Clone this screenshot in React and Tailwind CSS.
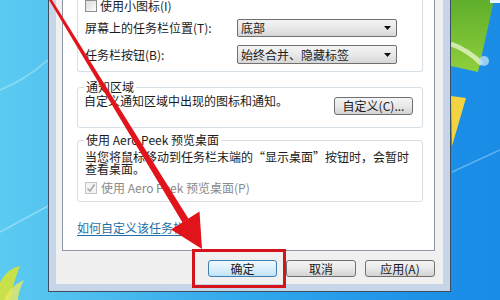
import React from 'react';

const font = "font-['Noto_Sans_CJK_SC','Noto_Sans',sans-serif]";

function Wallpaper() {
  return (
    <svg className="absolute inset-0" width="500" height="300" viewBox="0 0 500 300">
      <defs>
        <linearGradient id="sky" x1="0" y1="0" x2="1" y2="0">
          <stop offset="0" stopColor="#5ccbf1" />
          <stop offset="0.45" stopColor="#35aaec" />
          <stop offset="0.9" stopColor="#1b8ee7" />
          <stop offset="1" stopColor="#1a8ce6" />
        </linearGradient>
        <linearGradient id="green" x1="0" y1="0" x2="0" y2="1">
          <stop offset="0" stopColor="#5fae2c" />
          <stop offset="1" stopColor="#8fcf3c" />
        </linearGradient>
      </defs>
      <rect width="500" height="300" fill="url(#sky)" />
      <path d="M0 90 Q 25 80 48 60" stroke="#9fe3f8" strokeWidth="2" fill="none" opacity="0.6" />
      <path d="M0 232 L48 206" stroke="#a8e6fa" strokeWidth="1.5" opacity="0.7" />
      <path d="M0 282 Q 8 268 20 266 Q 14 280 10 300 L0 300 Z" fill="#c8e04a" />
      <path d="M4 300 Q 10 286 24 280 Q 18 292 18 300 Z" fill="#e8e860" opacity="0.8" />
      <path d="M451 0 L494 0 L478 72 L451 66 Z" fill="url(#green)" />
      <path d="M451 44 Q 468 50 482 64" stroke="#e6f2c8" strokeWidth="5" fill="none" opacity="0.8" />
      <circle cx="484" cy="61" r="5" fill="#b9dcf6" opacity="0.8" />
      <path d="M490 0 L500 0 L500 3 L490 3 Z" fill="#e8f4ff" />
      <path d="M451 96 L466 98 L452 146 Z" fill="#f3d440" />
      <path d="M452 172 L500 150" stroke="#5fb3f0" strokeWidth="1.5" />
    </svg>
  );
}

function Arrow() {
  return (
    <svg className="absolute inset-0 pointer-events-none" width="500" height="300" viewBox="0 0 500 300">
      <polygon points="49,0 52,0 188.5,218.8 182.5,222.4" fill="#e2141b" />
      <polygon points="202,249 199.5,211.5 171,229.5" fill="#e2141b" />
    </svg>
  );
}

function Checkbox({ checked }) {
  if (checked) {
    return (
      <span className="w-[12px] h-[12px] border border-[#c4c4c4] bg-[#f4f4f4] flex items-center justify-center shrink-0">
        <svg width="10" height="10" viewBox="0 0 10 10">
          <path d="M1.5 5.5 L4 8 L8.5 1.5" stroke="#a9a9a9" strokeWidth="1.6" fill="none" />
        </svg>
      </span>
    );
  }
  return (
    <span className="w-[12px] h-[12px] border border-[#8f8f8f] bg-gradient-to-br from-[#dcdcdc] to-[#fbfbfb] shrink-0" />
  );
}

function Combo({ value }) {
  return (
    <div className="w-[160px] h-full border border-[#707070] rounded-[2px] bg-gradient-to-b from-[#f3f3f3] via-[#e9e9e9] to-[#d6d6d6] flex items-center justify-between pl-[3px] pr-[5px]">
      <span>{value}</span>
      <svg width="7" height="4" viewBox="0 0 7 4">
        <path d="M0 0 L7 0 L3.5 4 Z" fill="#111" />
      </svg>
    </div>
  );
}

function Button({ children, primary, className = '' }) {
  const look = primary
    ? 'border-[#3c7fb1] bg-gradient-to-b from-[#eef8fd] via-[#dcf0fb] to-[#c0e2f5]'
    : 'border-[#707070] bg-gradient-to-b from-[#f5f5f5] via-[#e8e8e8] to-[#d3d3d3]';
  return (
    <div className={`h-[17px] border rounded-[3px] flex items-center justify-center text-[12px] leading-[12px] ${look} ${className}`}>
      {children}
    </div>
  );
}

export default function App() {
  return (
    <div className={`relative w-[500px] h-[300px] overflow-hidden text-[12px] leading-[12px] text-[#1b1b1b] ${font}`}>
      <Wallpaper />
      <div className="relative ml-[48px] w-[403px] h-[292px] border-x border-b border-[#3b4d5f] bg-[#c6d6e8] px-[7px] pb-[7px] flex flex-col">
        <div className="flex-1 bg-[#f0f0f0] pl-[6px] pr-[8px] flex flex-col">
          <div className="flex-1 bg-white border-x border-b border-[#8e97a3] pl-[14px] pr-[11px] flex flex-col">
            {/* taskbar appearance group (top cut off) */}
            <div className="border-x border-b border-[#d5dfe5] rounded-b-[3px] pl-[7px] pb-[7px]">
              <div className="h-[12px] flex items-center gap-[3px]">
                <Checkbox />
                <span>使用小图标(I)</span>
              </div>
              <div className="mt-[7px] h-[18px] flex items-center">
                <span className="w-[152px]">屏幕上的任务栏位置(T):</span>
                <Combo value="底部" />
              </div>
              <div className="mt-[8px] h-[19px] flex items-center">
                <span className="w-[152px]">任务栏按钮(B):</span>
                <Combo value="始终合并、隐藏标签" />
              </div>
            </div>

            <fieldset className="mt-[9px] border border-[#d5dfe5] rounded-[3px] pl-[6px] pr-[9px] pb-[12px]">
              <legend className="px-[2px]">通知区域</legend>
              <div className="mt-[2px] flex items-start justify-between">
                <span>自定义通知区域中出现的图标和通知。</span>
                <Button className="w-[79px] h-[18px] mt-[2px]">自定义(C)...</Button>
              </div>
            </fieldset>

            <fieldset className="mt-[6px] border border-[#d5dfe5] rounded-[3px] pl-[6px] pr-[9px] pb-[7px]">
              <legend className="px-[2px]">使用 Aero Peek 预览桌面</legend>
              <p className="mt-[5px] pl-[1px]">
                当您将鼠标移动到任务栏末端的“显示桌面”按钮时，会暂时
                <br />
                查看桌面。
              </p>
              <div className="mt-[7px] h-[12px] flex items-center gap-[4px] pl-[1px] text-[#8a8a8a]">
                <Checkbox checked />
                <span>使用 Aero Peek 预览桌面(P)</span>
              </div>
            </fieldset>

            <a className="mt-[20px] self-start text-[#1f6ea6] underline underline-offset-2">如何自定义该任务栏?</a>
          </div>

          <div className="pt-[9px] pb-[7px] flex justify-end gap-[9px]">
            <Button primary className="w-[69px]">确定</Button>
            <Button className="w-[70px]">取消</Button>
            <Button className="w-[70px]">应用(A)</Button>
          </div>
        </div>
      </div>
      <div className="absolute left-[192px] top-[249px] w-[94px] h-[39px] border-[3px] border-[#d4141a]" />
      <Arrow />
    </div>
  );
}
